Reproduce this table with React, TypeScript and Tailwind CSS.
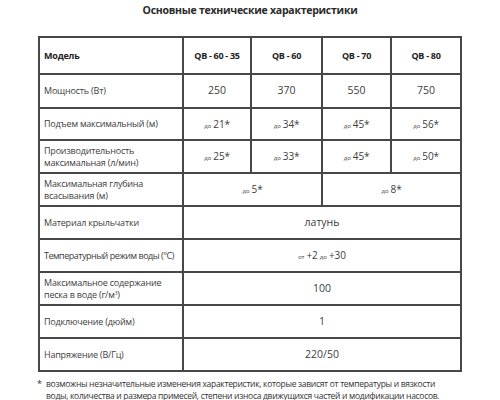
import React from "react";

const Do = ({ v }: { v: string }) => (
  <span className="whitespace-nowrap">
    <span className="text-[6px] mr-[2px] tracking-normal">до</span>
    <span className="text-[10px] tracking-[-0.2px]">{v}</span>
  </span>
);

const td = "border-2 border-[#474747] text-center align-middle p-0";
const lab = "border-2 border-[#474747] text-left align-middle pl-[4px] pr-0 leading-[12px] whitespace-nowrap tracking-[-0.2px]";
const num = td + " text-[10.5px]";
const head = td + " font-bold text-[9px] tracking-[-0.3px] text-[#222]";

export default function App() {
  return (
    <div className="w-[500px] h-[400px] bg-white text-[#3d3d3d] overflow-hidden" style={{ fontFamily: '"Open Sans", "Noto Sans", sans-serif' }}>
      <div className="h-[36px] pt-[3px] text-center text-[10.5px] font-bold tracking-[-0.25px] text-[#2a2a2a]">
        Основные технические характеристики
      </div>
      <table className="ml-[38px] border-collapse table-fixed w-[422px] text-[9px]">
        <colgroup>
          <col className="w-[144px]" />
          <col className="w-[68px]" />
          <col className="w-[71px]" />
          <col className="w-[69px]" />
          <col className="w-[70px]" />
        </colgroup>
        <tbody>
          <tr className="h-[37px]">
            <td className={lab + " font-bold text-[#222]"}>Модель</td>
            <td className={head}>QB - 60 - 35</td>
            <td className={head}>QB - 60</td>
            <td className={head}>QB - 70</td>
            <td className={head}>QB - 80</td>
          </tr>
          <tr className="h-[34px]">
            <td className={lab}>Мощность (Вт)</td>
            <td className={num}>250</td>
            <td className={num}>370</td>
            <td className={num}>550</td>
            <td className={num}>750</td>
          </tr>
          <tr className="h-[32px]">
            <td className={lab}>Подъем максимальный (м)</td>
            <td className={td}><Do v="21*" /></td>
            <td className={td}><Do v="34*" /></td>
            <td className={td}><Do v="45*" /></td>
            <td className={td}><Do v="56*" /></td>
          </tr>
          <tr className="h-[33px]">
            <td className={lab}>Производительность<br />максимальная (л/мин)</td>
            <td className={td}><Do v="25*" /></td>
            <td className={td}><Do v="33*" /></td>
            <td className={td}><Do v="45*" /></td>
            <td className={td}><Do v="50*" /></td>
          </tr>
          <tr className="h-[33px]">
            <td className={lab}>Максимальная глубина<br />всасывания (м)</td>
            <td className={td} colSpan={2}><Do v="5*" /></td>
            <td className={td} colSpan={2}><Do v="8*" /></td>
          </tr>
          <tr className="h-[33px]">
            <td className={lab}>Материал крыльчатки</td>
            <td className={num} colSpan={4}>латунь</td>
          </tr>
          <tr className="h-[33px]">
            <td className={lab + " tracking-[-0.5px]"}>Температурный режим воды (°C)</td>
            <td className={td} colSpan={4}>
              <span className="text-[6px] mr-[2px]">от</span>
              <span className="text-[10px] mr-[2px]">+2</span>
              <span className="text-[6px] mr-[2px]">до</span>
              <span className="text-[10px]">+30</span>
            </td>
          </tr>
          <tr className="h-[33px]">
            <td className={lab}>Максимальное содержание<br />песка в воде (г/м<sup className="text-[5px]">3</sup>)</td>
            <td className={num} colSpan={4}>100</td>
          </tr>
          <tr className="h-[33px]">
            <td className={lab}>Подключение (дюйм)</td>
            <td className={num} colSpan={4}>1</td>
          </tr>
          <tr className="h-[33px]">
            <td className={lab}>Напряжение (В/Гц)</td>
            <td className={num} colSpan={4}>220/50</td>
          </tr>
        </tbody>
      </table>
      <div className="flex ml-[37px] mt-[6px] text-[8.5px] leading-[11.5px] tracking-[-0.3px] text-[#333] whitespace-nowrap">
        <span className="w-[9px] shrink-0 text-[9px]">*</span>
        <span className="flex flex-col">
          <span>возможны незначительные изменения характеристик, которые зависят от температуры и вязкости</span>
          <span>воды, количества и размера примесей, степени износа движущихся частей и модификации насосов.</span>
        </span>
      </div>
    </div>
  );
}
